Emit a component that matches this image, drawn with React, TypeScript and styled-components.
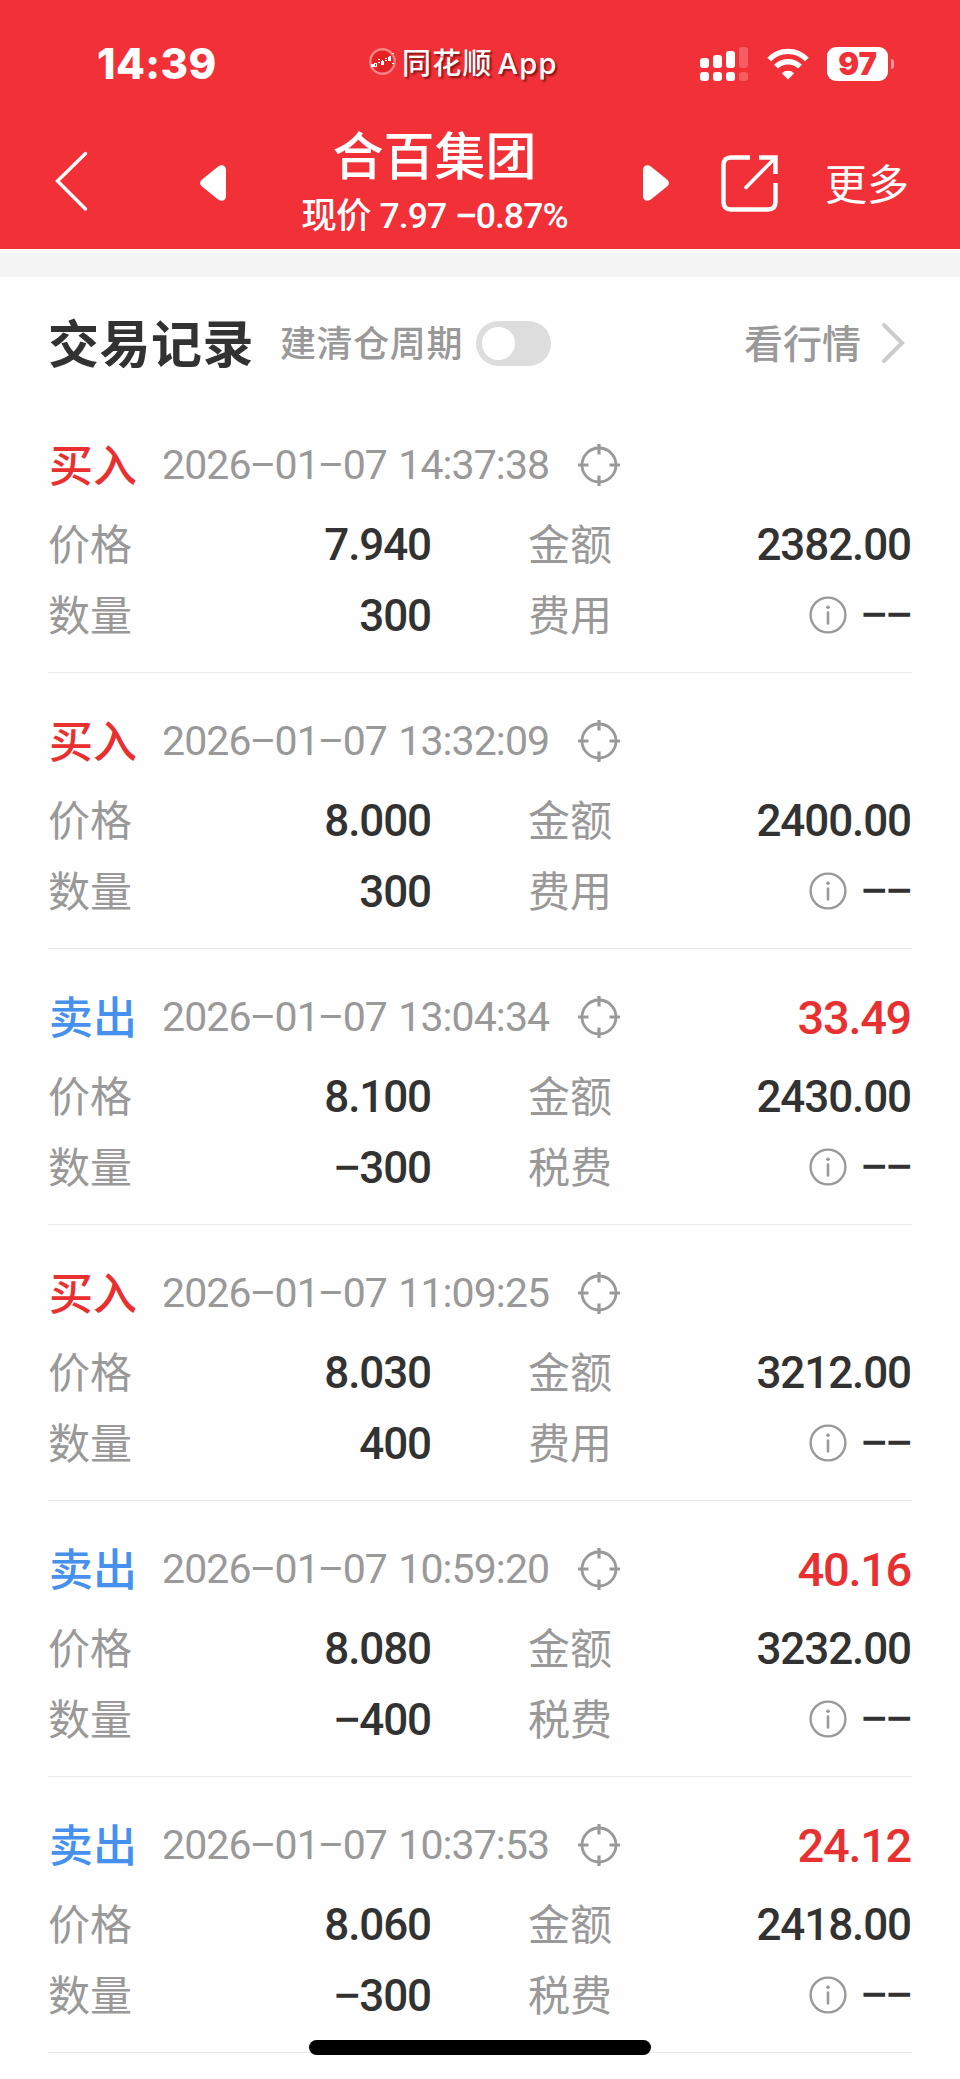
import React from "react";
import styled, { createGlobalStyle } from "styled-components";

const GlobalStyle = createGlobalStyle`
  * { box-sizing: border-box; }
  body { margin: 0; background: #fefefe; }
`;

const cjk = `"Noto Sans CJK SC", sans-serif`;
const digits = `Roboto, "Noto Sans CJK SC", sans-serif`;

const Screen = styled.div`
  position: relative;
  width: 960px;
  height: 2079px;
  overflow: hidden;
  background: #fefefe;
  font-family: ${cjk};
  white-space: nowrap;
`;

const Header = styled.header`
  height: 249px;
  background: #f23037;
  color: #fff;
`;

const StatusBar = styled.div`
  display: flex;
  align-items: center;
  height: 128px;
  padding-left: 97px;
`;

const Clock = styled.div`
  width: 272px;
  font: 800 42px/50px Inter, sans-serif;
  letter-spacing: 0.4px;
`;

const Logo = styled.svg`
  margin-bottom: 5px;
`;

const AppName = styled.div`
  width: 298px;
  margin-left: 6px;
  font: 500 29px/40px Inter, ${cjk};
  letter-spacing: 1.3px;
  word-spacing: -4.5px;
  text-shadow: 2px 2px 2px rgba(60, 0, 0, 0.6);
`;

const Battery = styled.div`
  width: 61px;
  height: 34px;
  margin-left: 18px;
  border-radius: 9px;
  background: #fff;
  color: #f23037;
  text-align: center;
  font: 900 31px/34px Inter, sans-serif;
`;

const BatteryTip = styled.div`
  width: 3px;
  height: 10px;
  margin-left: 3px;
  border-radius: 0 3px 3px 0;
  background: rgba(255, 255, 255, 0.5);
`;

const NavBar = styled.div`
  display: flex;
  align-items: flex-start;
  height: 121px;
  padding-left: 53px;
`;

const NavIcon = styled.svg<{ $top: number; $left?: number }>`
  flex: none;
  margin-top: ${(p) => p.$top}px;
  margin-left: ${(p) => p.$left ?? 0}px;
`;

const StockTitle = styled.div`
  width: 417px;
  text-align: center;
`;

const StockName = styled.div`
  font: 500 51px/50px ${cjk};
`;

const StockQuote = styled.div`
  font: 500 35.5px/46px ${digits};
  margin-top: 15px;
  letter-spacing: -0.9px;
  word-spacing: 1px;
`;

const More = styled.div`
  margin: 29px 0 0 46px;
  font: 400 42px/50px ${cjk};
`;

const Gap = styled.div`
  height: 28px;
  border-top: 4px solid #fefefe;
  background: #f4f4f4;
`;

const SectionHead = styled.div`
  display: flex;
  align-items: center;
  height: 120px;
  padding: 12px 55px 0 48px;
  color: #999;
`;

const SectionTitle = styled.h1`
  margin: 0 0 4px;
  font: 700 51px/60px ${cjk};
  letter-spacing: 0.5px;
  color: #323232;
`;

const SwitchLabel = styled.div`
  margin: 0 0 4px 26px;
  font: 500 36px/44px ${cjk};
  letter-spacing: 0.6px;
`;

const Switch = styled.div`
  width: 75px;
  height: 45px;
  margin-left: 13px;
  padding: 6px;
  border-radius: 23px;
  background: #ddd;
`;

const Knob = styled.div`
  width: 33px;
  height: 33px;
  border-radius: 50%;
  background: #fff;
`;

const MarketLink = styled.div`
  display: flex;
  align-items: center;
  gap: 20px;
  margin-left: auto;
`;

const MarketText = styled.span`
  margin-bottom: 4px;
  font: 500 39px/50px ${cjk};
`;

const Record = styled.article`
  height: 276px;
  margin: 0 48px;
  padding-top: 37px;
  border-bottom: 1px solid #ebebeb;
`;

const RecordHead = styled.div`
  display: flex;
  align-items: center;
  height: 61px;
  margin-bottom: 13px;
`;

const Side = styled.div<{ $sell: boolean }>`
  width: 113px;
  margin: 0 0 2px 1px;
  font: 500 44px/57px ${cjk};
  color: ${(p) => (p.$sell ? "#4691ee" : "#e93030")};
`;

const Time = styled.div`
  width: 416px;
  font: 400 41px/60px ${digits};
  letter-spacing: -0.9px;
  word-spacing: 2px;
  color: #999;
`;

const Profit = styled.div`
  margin: 2px 1px 0 auto;
  font: 500 47px/60px ${digits};
  letter-spacing: -1.3px;
  color: #e93030;
`;

const Fields = styled.div`
  display: grid;
  grid-template-columns: 384px 384px;
  column-gap: 96px;
  grid-auto-rows: 71px;
`;

const Field = styled.div`
  display: flex;
  align-items: center;
  justify-content: space-between;
`;

const Label = styled.span`
  margin-bottom: 4px;
  font: 400 42px/60px ${cjk};
  color: #999;
`;

const Value = styled.span`
  display: flex;
  align-items: center;
  margin: 3px 1px 0 0;
  font: 500 44px/60px ${digits};
  letter-spacing: -1.1px;
  color: #323232;
`;

const FeeValue = styled(Value)`
  margin-top: 0;
  gap: 14px;
`;

const Dash = styled.span`
  display: inline-block;
  margin: 0 0.7px;
  transform: scaleX(1.18);
`;

const HomeIndicator = styled.div`
  position: absolute;
  left: 309px;
  top: 2040px;
  width: 342px;
  height: 15px;
  border-radius: 8px;
  background: #000;
`;

/* Numeric text whose minus signs are drawn as wide dashes. */
const Numeric = ({ text }: { text: string }) => (
  <span>
    {text.split(/(−)/).map((part, i) => (part === "−" ? <Dash key={i}>−</Dash> : part))}
  </span>
);

const AppLogo = () => (
  <Logo width="27" height="27" viewBox="0 0 27 27">
    <circle cx="13.5" cy="13.5" r="12.2" fill="#e52124" stroke="#f88286" strokeWidth="2.4" />
    <g fill="#fff">
      <rect x="2" y="16" width="3" height="3" />
      <path d="M5 15h3v4h-3zM6 16v2h1v-2z" fillRule="evenodd" />
      <rect x="9" y="11" width="2" height="1" />
      <rect x="9" y="14" width="2" height="1" />
      <path d="M12 13h1v-1h1v1h1v4h-3z" />
      <rect x="16" y="10" width="2" height="1" />
      <rect x="16" y="12" width="2" height="1" />
      <path d="M19 9h1v-1h2v5h-3zM23 5h2v1h-2zM23 15h2v1h-2z" />
    </g>
  </Logo>
);

const SignalIcon = () => (
  <svg width="48" height="36" viewBox="0 0 48 36" fill="#fff">
    <rect x="0" y="12" width="9" height="10" rx="3" />
    <rect x="13" y="9" width="9" height="13" rx="3" />
    <rect x="26" y="5" width="9" height="17" rx="3" />
    <rect x="39" y="1" width="9" height="21" rx="3" opacity=".22" />
    <rect x="0" y="26" width="9" height="9" rx="3" />
    <rect x="13" y="26" width="9" height="9" rx="3" />
    <rect x="26" y="26" width="9" height="9" rx="3" />
    <rect x="39" y="26" width="9" height="9" rx="3" opacity=".22" />
  </svg>
);

const WifiIcon = styled.svg`
  margin-left: 19px;
`;

const TargetIcon = () => (
  <svg width="42" height="42" viewBox="0 0 42 42" fill="none" stroke="#999" strokeWidth="2.8">
    <circle cx="21" cy="21" r="17" />
    <path d="M21 0v10.5M21 31.5V42M0 21h10.5M31.5 21H42" strokeWidth="3.2" />
  </svg>
);

const InfoIcon = () => (
  <svg width="38" height="38" viewBox="0 0 38 38" fill="none" stroke="#999" strokeWidth="2.4">
    <circle cx="19" cy="19" r="17.4" />
    <path d="M19 15.5V28.5" strokeWidth="2.6" />
    <circle cx="19" cy="11.3" r="1.8" fill="#999" stroke="none" />
  </svg>
);

interface Trade {
  side: "买入" | "卖出";
  time: string;
  price: string;
  amount: string;
  quantity: string;
  profit?: string;
}

const trades: Trade[] = [
  { side: "买入", time: "2026−01−07 14:37:38", price: "7.940", amount: "2382.00", quantity: "300" },
  { side: "买入", time: "2026−01−07 13:32:09", price: "8.000", amount: "2400.00", quantity: "300" },
  { side: "卖出", time: "2026−01−07 13:04:34", price: "8.100", amount: "2430.00", quantity: "−300", profit: "33.49" },
  { side: "买入", time: "2026−01−07 11:09:25", price: "8.030", amount: "3212.00", quantity: "400" },
  { side: "卖出", time: "2026−01−07 10:59:20", price: "8.080", amount: "3232.00", quantity: "−400", profit: "40.16" },
  { side: "卖出", time: "2026−01−07 10:37:53", price: "8.060", amount: "2418.00", quantity: "−300", profit: "24.12" },
];

const TradeRecord = ({ trade }: { trade: Trade }) => {
  const sell = trade.side === "卖出";
  return (
    <Record>
      <RecordHead>
        <Side $sell={sell}>{trade.side}</Side>
        <Time>
          <Numeric text={trade.time} />
        </Time>
        <TargetIcon />
        {trade.profit && <Profit>{trade.profit}</Profit>}
      </RecordHead>
      <Fields>
        <Field>
          <Label>价格</Label>
          <Value>{trade.price}</Value>
        </Field>
        <Field>
          <Label>金额</Label>
          <Value>{trade.amount}</Value>
        </Field>
        <Field>
          <Label>数量</Label>
          <Value>
            <Numeric text={trade.quantity} />
          </Value>
        </Field>
        <Field>
          <Label>{sell ? "税费" : "费用"}</Label>
          <FeeValue>
            <InfoIcon />
            <Numeric text="−−" />
          </FeeValue>
        </Field>
      </Fields>
    </Record>
  );
};

export default function App() {
  return (
    <Screen>
      <GlobalStyle />
      <Header>
        <StatusBar>
          <Clock>14:39</Clock>
          <AppLogo />
          <AppName>同花顺 App</AppName>
          <SignalIcon />
          <WifiIcon width="42" height="32" viewBox="0 0 42 32" fill="none" stroke="#fff" strokeWidth="5.4">
            <path d="M2.2 11.5C12.5 .6 29.5 .6 39.8 11.5" />
            <path d="M9 18.7C15.6 12 26.4 12 33 18.7" />
            <path d="M21 31.5L14.8 25.2C18.2 21.9 23.8 21.9 27.2 25.2Z" fill="#fff" stroke="none" />
          </WifiIcon>
          <Battery>97</Battery>
          <BatteryTip />
        </StatusBar>
        <NavBar>
          <NavIcon $top={22} width="36" height="62" viewBox="0 0 36 62" fill="none" stroke="#fff" strokeWidth="3.4">
            <path d="M32.5 3.5L4.5 31L32.5 59" strokeLinecap="round" />
          </NavIcon>
          <NavIcon $top={36} $left={111} width="26" height="38" viewBox="0 0 26 38" fill="#fff">
            <path d="M26 6C26 1 21 0 17.5 3L2 15.5C-.5 17.5-.5 20.5 2 22.5L17.5 35C21 38 26 37 26 32Z" />
          </NavIcon>
          <StockTitle>
            <StockName>合百集团</StockName>
            <StockQuote>
              <Numeric text="现价 7.97 −0.87%" />
            </StockQuote>
          </StockTitle>
          <NavIcon $top={36} width="26" height="38" viewBox="0 0 26 38" fill="#fff">
            <path d="M0 6C0 1 5 0 8.5 3L24 15.5C26.5 17.5 26.5 20.5 24 22.5L8.5 35C5 38 0 37 0 32Z" />
          </NavIcon>
          <NavIcon $top={27} $left={52} width="58" height="58" viewBox="0 0 58 58" fill="none" stroke="#fff" strokeWidth="4.4">
            <path d="M29 2.5H10Q2.5 2.5 2.5 10V47Q2.5 54.5 10 54.5H47Q54.5 54.5 54.5 47V28M38 2.5H54.5V19" />
            <path d="M54 3L25 32.5" strokeWidth="3.6" strokeLinecap="round" />
          </NavIcon>
          <More>更多</More>
        </NavBar>
      </Header>
      <Gap />
      <SectionHead>
        <SectionTitle>交易记录</SectionTitle>
        <SwitchLabel>建清仓周期</SwitchLabel>
        <Switch>
          <Knob />
        </Switch>
        <MarketLink>
          <MarketText>看行情</MarketText>
          <svg width="24" height="42" viewBox="0 0 24 42" fill="none" stroke="#ccc" strokeWidth="4">
            <path d="M3 3L21 21L3 39" strokeLinecap="round" />
          </svg>
        </MarketLink>
      </SectionHead>
      {trades.map((trade) => (
        <TradeRecord key={trade.time} trade={trade} />
      ))}
      <HomeIndicator />
    </Screen>
  );
}
